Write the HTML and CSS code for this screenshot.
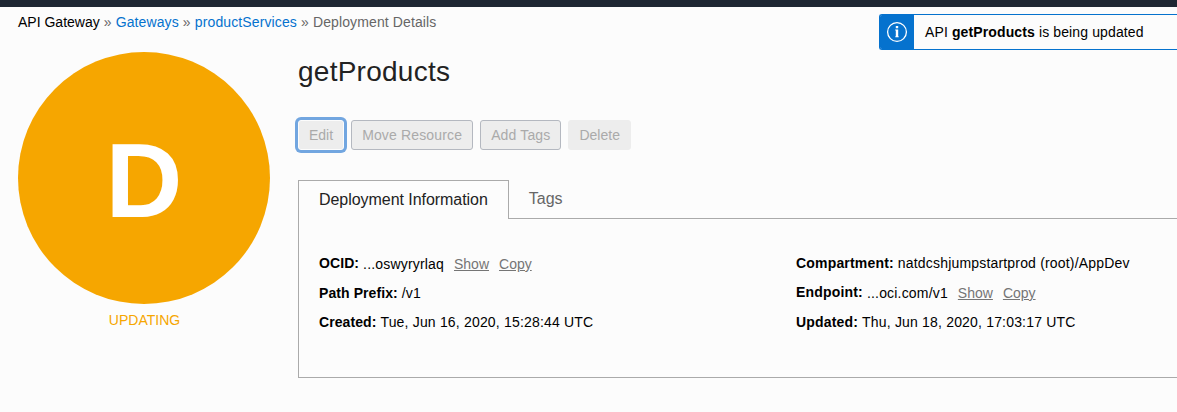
FILE: index.html
```html
<!DOCTYPE html>
<html lang="en">
<head>
<meta charset="utf-8">
<title>Deployment Details</title>
<link rel="stylesheet" href="styles.css">
</head>
<body>
<div class="topbar"></div>
<nav class="breadcrumb"><span class="root">API Gateway</span> » <a href="#">Gateways</a> » <a href="#">productServices</a> » Deployment Details</nav>
<div class="toast" role="status">
  <div class="toast-icon">
    <svg width="22" height="22" viewBox="0 0 22 22" fill="none">
      <circle cx="11" cy="11" r="9.4" stroke="#fff" stroke-width="1.3"/>
      <path d="M9.8 5h2.4v2.2H9.8zM9.2 8.6h3v6.6h.5v1H9.3v-1h.5V9.6h-.6z" fill="#fff"/>
    </svg>
  </div>
  <div class="toast-text">API <b>getProducts</b> is being updated</div>
</div>
<main class="page">
  <aside class="status">
    <div class="circle">D</div>
    <div class="state">UPDATING</div>
  </aside>
  <section class="details">
    <h1>getProducts</h1>
    <div class="actions">
      <button class="btn focused">Edit</button>
      <button class="btn wide">Move Resource</button>
      <button class="btn wide">Add Tags</button>
      <button class="btn danger">Delete</button>
    </div>
    <div class="tabs">
      <div class="tab active">Deployment Information</div>
      <div class="tab">Tags</div>
    </div>
    <div class="panel">
      <div class="column">
        <div class="row"><b>OCID:</b><span class="drop">...oswyryrlaq</span><a class="drop" href="#">Show</a><a class="drop" href="#">Copy</a></div>
        <div class="row"><b>Path Prefix:</b><span>/v1</span></div>
        <div class="row"><b>Created:</b><span>Tue, Jun 16, 2020, 15:28:44 UTC</span></div>
      </div>
      <div class="column right">
        <div class="row short"><b>Compartment:</b><span>natdcshjumpstartprod (root)/AppDev</span></div>
        <div class="row tall"><b>Endpoint:</b><span class="drop">...oci.com/v1</span><a class="drop" href="#">Show</a><a class="drop" href="#">Copy</a></div>
        <div class="row"><b>Updated:</b><span>Thu, Jun 18, 2020, 17:03:17 UTC</span></div>
      </div>
    </div>
  </section>
</main>
</body>
</html>
```
FILE: styles.css
```css
* { box-sizing: border-box; }
body {
  margin: 0;
  height: 412px;
  overflow: hidden;
  background: #fcfcfc;
  color: #000;
  font: 14px/20px "Liberation Sans", Arial, sans-serif;
}
a { color: #0572ce; text-decoration: none; }
.topbar { height: 7px; background: #1e2733; }
.breadcrumb { padding: 5px 18px 0; height: 45px; color: #666; letter-spacing: 0.12px; }
.breadcrumb .root { color: #000; letter-spacing: 0; }
.toast {
  position: absolute;
  top: 14px;
  left: 879px;
  right: 0;
  height: 36px;
  display: flex;
  border: 1px solid #0572ce;
  border-right: 0;
  border-radius: 3px 0 0 3px;
  background: #fcfcfc;
  overflow: hidden;
}
.toast-icon {
  width: 34px;
  display: flex;
  align-items: center;
  justify-content: center;
  background: #0572ce;
}
.toast-text { padding: 7px 11px; white-space: nowrap; letter-spacing: 0.12px; }
.page { display: flex; gap: 28px; padding-left: 18px; }
.status { width: 252px; flex: none; text-align: center; }
.circle {
  height: 252px;
  border-radius: 50%;
  background: #f6a600;
  color: #fff;
  font-size: 106.5px;
  font-weight: bold;
  line-height: 257px;
}
.state { margin-top: 6px; padding-left: 1px; color: #f6a600; }
.details { flex: 1; min-width: 0; }
h1 {
  margin: 0;
  height: 68px;
  padding-top: 3px;
  color: #222;
  font-size: 28px;
  font-weight: normal;
  line-height: 34px;
  letter-spacing: 0.25px;
}
.actions { display: flex; gap: 7px; height: 60px; }
.btn {
  height: 30px;
  padding: 0 10px;
  border: 1px solid #b4b8c0;
  border-radius: 3px;
  background: #ededed;
  color: #aaa;
  font: inherit;
}
.btn.wide { letter-spacing: 0.15px; }
.btn.focused { border-color: #fcfcfc; box-shadow: 0 0 0 3px #72a6e0; }
.btn.danger { border-color: #ededed; }
.tabs { display: flex; height: 39px; box-shadow: inset 0 -1px #aaa; }
.tab { padding: 8px 20px; color: #666; font-size: 16px; line-height: 22px; white-space: nowrap; }
.tab.active {
  border: 1px solid #aaa;
  border-bottom: 0;
  background: #fcfcfc;
  color: #222;
  letter-spacing: -0.05px;
}
.panel {
  display: grid;
  grid-template-columns: 477px 1fr;
  height: 159px;
  padding: 34px 0 0 20px;
  border-left: 1px solid #aaa;
  border-bottom: 1px solid #aaa;
}
.row { display: flex; align-items: flex-start; height: 30px; white-space: nowrap; }
.row b { margin-right: 4px; letter-spacing: 0.08px; }
.right .row b { letter-spacing: 0.18px; }
.row span { letter-spacing: 0.18px; }
.row:nth-child(2) { height: 29px; }
.row.short { height: 29px; }
.row.tall:nth-child(2) { height: 30px; }
.row a { margin-left: 10px; color: #757575; text-decoration: underline; }
.row .drop { padding-top: 1px; }
```
